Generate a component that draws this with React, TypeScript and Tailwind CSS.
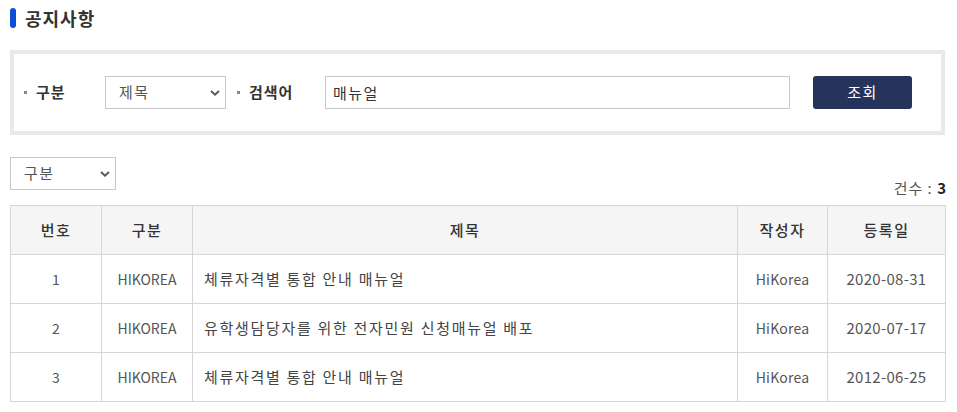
import {useState} from 'react'

const rows = [
  {no: 1, cat: 'HIKOREA', title: '체류자격별 통합 안내 매뉴얼', writer: 'HiKorea', date: '2020-08-31'},
  {no: 2, cat: 'HIKOREA', title: '유학생담당자를 위한 전자민원 신청매뉴얼 배포', writer: 'HiKorea', date: '2020-07-17'},
  {no: 3, cat: 'HIKOREA', title: '체류자격별 통합 안내 매뉴얼', writer: 'HiKorea', date: '2012-06-25'},
]

const Chevron = () => (
  <svg className="pointer-events-none absolute right-[6px] top-1/2 -translate-y-1/2" width="10" height="7" viewBox="0 0 10 7">
    <path d="M1 1.5 L5 5.2 L9 1.5" fill="none" stroke="#555" strokeWidth="1.8" />
  </svg>
)

const Select = ({value, options, className}: {value: string; options: string[]; className: string}) => {
  const [v, setV] = useState(value)
  return (
    <div className={`relative ${className}`}>
      <select
        value={v}
        onChange={e => setV(e.target.value)}
        className="appearance-none w-full h-full border border-[#c8c8c8] bg-white pl-[13px] text-[15px] tracking-[1.5px] text-[#555] outline-none"
      >
        {options.map(o => (
          <option key={o}>{o}</option>
        ))}
      </select>
      <Chevron />
    </div>
  )
}

const Label = ({text, className}: {text: string; className: string}) => (
  <div className={`flex items-center gap-[9px] shrink-0 ${className}`}>
    <span className="w-[3px] h-[3px] bg-[#888]"></span>
    <span className="text-[15px] font-bold tracking-[1px] text-[#333]">{text}</span>
  </div>
)

export default function App() {
  const [keyword, setKeyword] = useState('매뉴얼')
  const cell = 'border border-[#d6d6d6]'

  return (
    <div className="w-[957px] h-[412px] bg-white px-[10px] pt-[7px] [font-family:'Noto_Sans_CJK_KR',sans-serif] text-[#333]">
      <div className="flex items-center gap-[9px] h-[22px]">
        <span className="w-[6px] h-[20px] rounded-[3px] bg-[#0b4fd6]"></span>
        <h2 className="text-[18px] font-bold tracking-[1px] text-[#333] leading-none">공지사항</h2>
      </div>

      <div className="mt-[21px] w-[935px] h-[85px] border-4 border-[#e9e9e9] flex items-center pl-[10px]">
        <Label text="구분" className="w-[81px]" />
        <Select value="제목" options={['제목', '내용']} className="w-[121px] h-[33px] shrink-0" />
        <Label text="검색어" className="ml-[11px] w-[88px]" />
        <input
          value={keyword}
          onChange={e => setKeyword(e.target.value)}
          className="w-[465px] h-[33px] shrink-0 border border-[#c8c8c8] px-[7px] text-[15px] tracking-[1.5px] text-[#333] outline-none"
        />
        <button className="ml-[23px] w-[99px] h-[33px] shrink-0 rounded-[3px] bg-[#26345b] text-white text-[15px] tracking-[1.5px]">
          조회
        </button>
      </div>

      <div className="mt-[22px] flex items-end justify-between">
        <Select value="구분" options={['구분', 'HIKOREA']} className="w-[106px] h-[33px]" />
        <p className="text-[15px] tracking-[1px] text-[#555] leading-none mb-[-5px]">
          건수 : <b className="text-[#222]">3</b>
        </p>
      </div>

      <table className="mt-[15px] w-[935px] border-collapse text-[14px] text-center table-fixed">
        <colgroup>
          <col className="w-[91px]" />
          <col className="w-[91px]" />
          <col className="w-[545px]" />
          <col className="w-[90px]" />
          <col className="w-[118px]" />
        </colgroup>
        <thead>
          <tr className="h-[49px] bg-[#f5f5f5]">
            {['번호', '구분', '제목', '작성자', '등록일'].map(h => (
              <th key={h} className={`${cell} font-medium text-[15px] tracking-[1.5px] text-[#333]`}>
                {h}
              </th>
            ))}
          </tr>
        </thead>
        <tbody>
          {rows.map(r => (
            <tr key={r.no} className="h-[49px] text-[#555]">
              <td className={cell}>{r.no}</td>
              <td className={cell}>{r.cat}</td>
              <td className={`${cell} text-left pl-[11px] text-[15px] tracking-[1.7px] text-[#444]`}>{r.title}</td>
              <td className={`${cell} tracking-[0.2px]`}>{r.writer}</td>
              <td className={`${cell} text-[15px] tracking-[0.3px]`}>{r.date}</td>
            </tr>
          ))}
        </tbody>
      </table>
    </div>
  )
}
